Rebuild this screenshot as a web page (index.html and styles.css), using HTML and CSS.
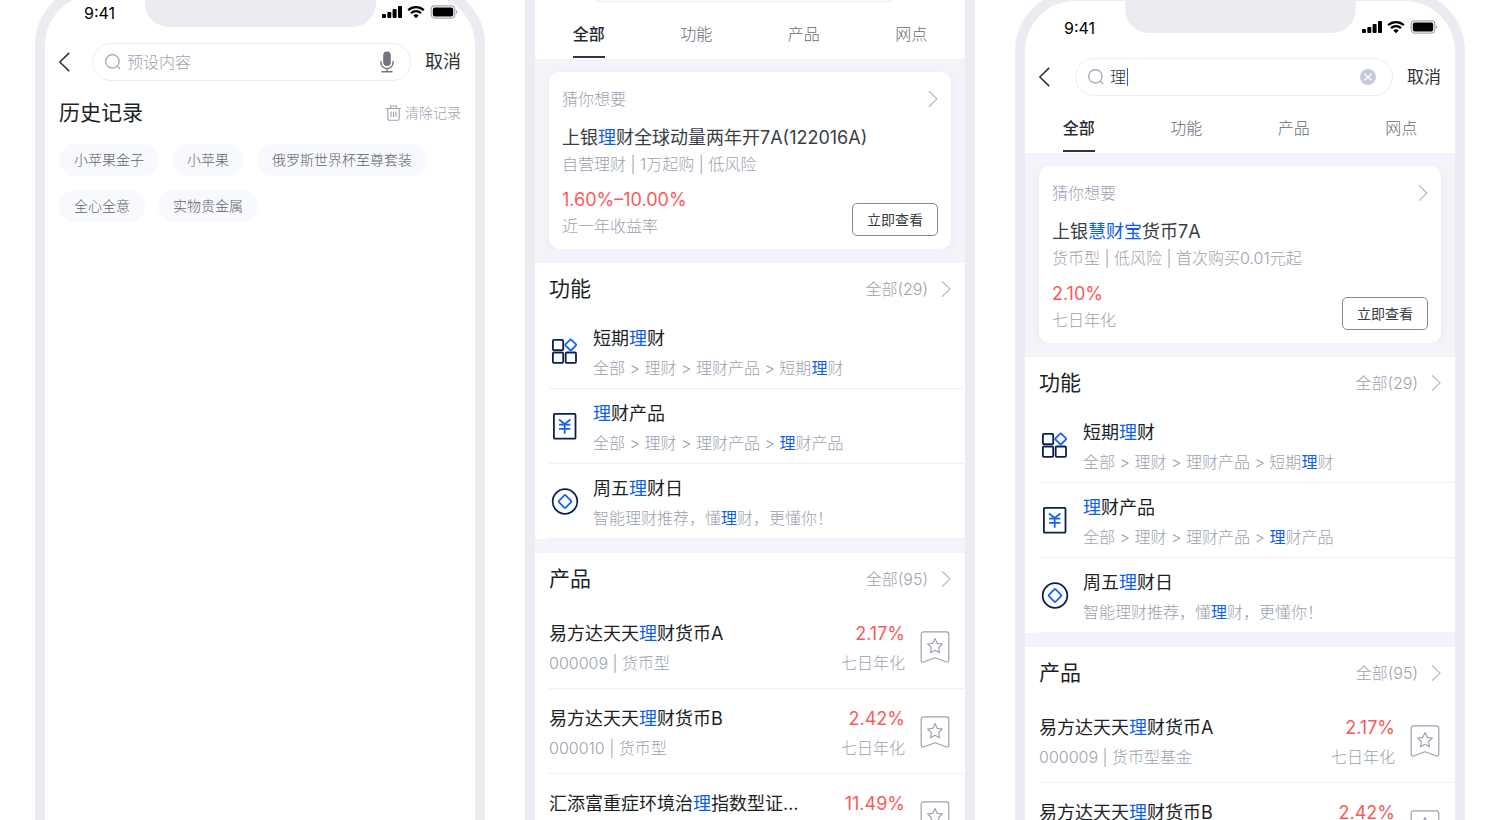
FILE: index.html
```html
<!DOCTYPE html>
<html lang="zh-CN">
<head>
    <meta charset="UTF-8">
    <meta name="viewport" content="width=device-width, initial-scale=1.0">
    <title>搜索</title>
    <link rel="stylesheet" href="styles.css">
</head>
<body>
    <!-- Shared icons -->
    <svg class="sprite" aria-hidden="true">
        <symbol id="i-signal" viewBox="0 0 20 14">
            <rect x="0" y="9" width="4" height="4" rx="1"/>
            <rect x="5.300" y="7" width="4" height="6" rx="1"/>
            <rect x="10.600" y="4" width="4" height="9" rx="1"/>
            <rect x="16" y="1" width="4" height="12" rx="1"/>
        </symbol>
        <symbol id="i-wifi" viewBox="0 0 18 14">
            <path d="M1.200 5.200a11.300 11.300 0 0 1 15.600 0M4 8.200a7.200 7.200 0 0 1 10 0" fill="none" stroke="currentColor" stroke-width="2.300"/>
            <path d="M9 13.200 6.300 10.500a3.900 3.900 0 0 1 5.400 0z"/>
        </symbol>
        <symbol id="i-battery" viewBox="0 0 28 14">
            <rect x="1.200" y=".9" width="23.600" height="12.200" rx="3.500" fill="none" stroke="#a9a9a9" stroke-width="1.200"/>
            <rect x="2.800" y="2.500" width="20.400" height="9" rx="2"/>
            <path d="M26 5v4a2.200 2.200 0 0 0 0-4z" fill="#a9a9a9"/>
        </symbol>
        <symbol id="i-back" viewBox="0 0 12 20">
            <path d="M10.200.9.800 10l9.400 9.100" fill="none" stroke="currentColor" stroke-width="1.600"/>
        </symbol>
        <symbol id="i-search" viewBox="0 0 16 16">
            <circle cx="7.400" cy="7.400" r="6.700" fill="none" stroke="currentColor" stroke-width="1.200"/>
            <path d="m12.200 12.200 3 3" stroke="currentColor" stroke-width="1.200"/>
        </symbol>
        <symbol id="i-mic" viewBox="0 0 14 22">
            <rect x="3.200" y=".5" width="7.600" height="14.500" rx="3.800"/>
            <path d="M.9 10v1.500a6.100 6.100 0 0 0 12.200 0V10M7 17.600v3M1.500 20.700h11" fill="none" stroke="currentColor" stroke-width="1.400"/>
        </symbol>
        <symbol id="i-clear" viewBox="0 0 16 16">
            <circle cx="8" cy="8" r="8"/>
            <path d="m4.700 4.700 6.600 6.600m0-6.600-6.600 6.600" stroke="#fff" stroke-width="1.300"/>
        </symbol>
        <symbol id="i-trash" viewBox="0 0 15 16">
            <path d="M0 3.500h15M4.500 3.200V1h6v2.200M1.800 3.500v10a1.800 1.800 0 0 0 1.800 1.800h7.800a1.800 1.800 0 0 0 1.800-1.800v-10M5 6.500V12M7.500 6.500V12M10 6.500V12" fill="none" stroke="currentColor" stroke-width="1.100"/>
        </symbol>
        <symbol id="i-next" viewBox="0 0 10 18">
            <path d="m1 1.200 8 7.800-8 7.800" fill="none" stroke="currentColor" stroke-width="1.200"/>
        </symbol>
        <symbol id="i-grid" viewBox="0 0 30 30">
            <g fill="none" stroke-width="1.800">
                <path d="M4.900 3.900h8.300q1 0 1 1v8.300q0 1-1 1H4.900q-1 0-1-1V4.900q0-1 1-1zM4.900 16.500h8.300q1 0 1 1v8.300q0 1-1 1H4.900q-1 0-1-1v-8.300q0-1 1-1zM17.700 16.500H26q1 0 1 1v8.300q0 1-1 1h-8.300q-1 0-1-1v-8.300q0-1 1-1z" stroke="#0c2050"/>
                <path d="m21 3.800-4.400 4.400q-.7.7 0 1.400l4.400 4.400q.7.700 1.400 0l4.400-4.400q.7-.7 0-1.400l-4.400-4.400q-.7-.7-1.400 0z" stroke="#1663f5"/>
            </g>
        </symbol>
        <symbol id="i-yuan" viewBox="0 0 30 30">
            <g fill="none" stroke-width="1.800">
                <rect x="4.900" y="2.900" width="21.600" height="24.800" rx="1" stroke="#0c2050"/>
                <path d="m10 8.500 5.700 4.500 5.700-4.500M10 13.700h11.400M10 17.800h11.400M15.700 13v9.800" stroke="#1663f5"/>
            </g>
        </symbol>
        <symbol id="i-coin" viewBox="0 0 30 30">
            <g fill="none" stroke-width="1.800">
                <circle cx="16" cy="15.500" r="12.300" stroke="#0c2050"/>
                <path d="m15.300 9.400-5.400 5.400q-.7.7 0 1.400l5.400 5.400q.7.700 1.400 0l5.400-5.400q.7-.7 0-1.400l-5.400-5.400q-.7-.7-1.400 0z" stroke="#1663f5"/>
            </g>
        </symbol>
        <symbol id="i-star" viewBox="0 0 30 32">
            <g fill="none" stroke="currentColor" stroke-width="1.200" stroke-linejoin="round">
                <path d="M3.700.8h22.600q2.500 0 2.500 2.500v26q0 2.300-2.200 1.700L15 26.800 3.400 31q-2.200.6-2.200-1.700v-26Q1.200.8 3.700.8z"/>
                <path d="m15 7.600 2.200 4.700 5.100.7-3.700 3.600.9 5.100-4.500-2.500-4.500 2.500.9-5.100L7.700 13l5.100-.7z"/>
            </g>
        </symbol>
    </svg>

    <main class="stage">
        <!-- Search history -->
        <section class="phone phone-history">
            <div class="notch"></div>
            <div class="status-bar">
                <span class="time">9:41</span>
                <span class="status-icons">
                    <svg width="20" height="14"><use href="#i-signal"/></svg>
                    <svg width="18" height="14"><use href="#i-wifi"/></svg>
                    <svg width="28" height="14"><use href="#i-battery"/></svg>
                </span>
            </div>
            <div class="nav">
                <button class="back" aria-label="返回"><svg width="12" height="20"><use href="#i-back"/></svg></button>
                <div class="search">
                    <svg class="search-icon" width="16" height="16"><use href="#i-search"/></svg>
                    <input type="text" placeholder="预设内容" aria-label="搜索">
                    <button class="mic" aria-label="语音输入"><svg width="14" height="22"><use href="#i-mic"/></svg></button>
                </div>
                <button class="cancel">取消</button>
            </div>
            <div class="history">
                <div class="history-head">
                    <h2>历史记录</h2>
                    <button class="clear-history"><svg width="15" height="16"><use href="#i-trash"/></svg>清除记录</button>
                </div>
                <div class="tags">
                    <button class="tag">小苹果金子</button>
                    <button class="tag">小苹果</button>
                    <button class="tag">俄罗斯世界杯至尊套装</button>
                    <button class="tag">全心全意</button>
                    <button class="tag">实物贵金属</button>
                </div>
            </div>
        </section>

        <!-- Results, scrolled -->
        <section class="phone phone-scrolled">
            <div class="notch"></div>
            <div class="status-bar"></div>
            <div class="nav">
                <div class="search"></div>
            </div>
            <nav class="tabs">
                <button class="tab active"><span>全部</span></button>
                <button class="tab"><span>功能</span></button>
                <button class="tab"><span>产品</span></button>
                <button class="tab"><span>网点</span></button>
            </nav>
            <div class="guess">
                <article class="card">
                    <a class="card-head" href="#">猜你想要<svg width="10" height="18"><use href="#i-next"/></svg></a>
                    <h3>上银<em>理</em>财全球动量两年开7A(122016A)</h3>
                    <p class="card-desc">自营理财 | 1万起购 | 低风险</p>
                    <div class="card-foot">
                        <div>
                            <p class="rate">1.60%–10.00%</p>
                            <p class="rate-label">近一年收益率</p>
                        </div>
                        <button class="view">立即查看</button>
                    </div>
                </article>
            </div>
            <section class="block">
                <div class="block-head">
                    <h2>功能</h2>
                    <a href="#">全部(29)<svg width="10" height="18"><use href="#i-next"/></svg></a>
                </div>
                <ul class="list">
                    <li class="feature">
                        <svg width="30" height="30"><use href="#i-grid"/></svg>
                        <div>
                            <h3>短期<em>理</em>财</h3>
                            <p>全部 &gt; 理财 &gt; 理财产品 &gt; 短期<em>理</em>财</p>
                        </div>
                    </li>
                    <li class="feature">
                        <svg width="30" height="30"><use href="#i-yuan"/></svg>
                        <div>
                            <h3><em>理</em>财产品</h3>
                            <p>全部 &gt; 理财 &gt; 理财产品 &gt; <em>理</em>财产品</p>
                        </div>
                    </li>
                    <li class="feature">
                        <svg width="30" height="30"><use href="#i-coin"/></svg>
                        <div>
                            <h3>周五<em>理</em>财日</h3>
                            <p>智能理财推荐，懂<em>理</em>财，更懂你！</p>
                        </div>
                    </li>
                </ul>
            </section>
            <section class="block">
                <div class="block-head">
                    <h2>产品</h2>
                    <a href="#">全部(95)<svg width="10" height="18"><use href="#i-next"/></svg></a>
                </div>
                <ul class="list">
                    <li class="product">
                        <div class="product-info">
                            <h3>易方达天天<em>理</em>财货币A</h3>
                            <p>000009 | 货币型</p>
                        </div>
                        <div class="product-rate">
                            <p class="rate">2.17%</p>
                            <p>七日年化</p>
                        </div>
                        <button class="fav" aria-label="收藏"><svg width="30" height="32"><use href="#i-star"/></svg></button>
                    </li>
                    <li class="product">
                        <div class="product-info">
                            <h3>易方达天天<em>理</em>财货币B</h3>
                            <p>000010 | 货币型</p>
                        </div>
                        <div class="product-rate">
                            <p class="rate">2.42%</p>
                            <p>七日年化</p>
                        </div>
                        <button class="fav" aria-label="收藏"><svg width="30" height="32"><use href="#i-star"/></svg></button>
                    </li>
                    <li class="product">
                        <div class="product-info">
                            <h3>汇添富重症环境治<em>理</em>指数型证...</h3>
                        </div>
                        <div class="product-rate">
                            <p class="rate">11.49%</p>
                        </div>
                        <button class="fav" aria-label="收藏"><svg width="30" height="32"><use href="#i-star"/></svg></button>
                    </li>
                </ul>
            </section>
        </section>

        <!-- Results -->
        <section class="phone">
            <div class="notch"></div>
            <div class="status-bar">
                <span class="time">9:41</span>
                <span class="status-icons">
                    <svg width="20" height="14"><use href="#i-signal"/></svg>
                    <svg width="18" height="14"><use href="#i-wifi"/></svg>
                    <svg width="28" height="14"><use href="#i-battery"/></svg>
                </span>
            </div>
            <div class="nav">
                <button class="back" aria-label="返回"><svg width="12" height="20"><use href="#i-back"/></svg></button>
                <div class="search">
                    <svg class="search-icon" width="16" height="16"><use href="#i-search"/></svg>
                    <input type="text" value="理" aria-label="搜索">
                    <span class="caret"></span>
                    <button class="clear" aria-label="清空"><svg width="16" height="16"><use href="#i-clear"/></svg></button>
                </div>
                <button class="cancel">取消</button>
            </div>
            <nav class="tabs">
                <button class="tab active"><span>全部</span></button>
                <button class="tab"><span>功能</span></button>
                <button class="tab"><span>产品</span></button>
                <button class="tab"><span>网点</span></button>
            </nav>
            <div class="guess">
                <article class="card">
                    <a class="card-head" href="#">猜你想要<svg width="10" height="18"><use href="#i-next"/></svg></a>
                    <h3>上银<em>慧财宝</em>货币7A</h3>
                    <p class="card-desc">货币型 | 低风险 | 首次购买0.01元起</p>
                    <div class="card-foot">
                        <div>
                            <p class="rate">2.10%</p>
                            <p class="rate-label">七日年化</p>
                        </div>
                        <button class="view">立即查看</button>
                    </div>
                </article>
            </div>
            <section class="block">
                <div class="block-head">
                    <h2>功能</h2>
                    <a href="#">全部(29)<svg width="10" height="18"><use href="#i-next"/></svg></a>
                </div>
                <ul class="list">
                    <li class="feature">
                        <svg width="30" height="30"><use href="#i-grid"/></svg>
                        <div>
                            <h3>短期<em>理</em>财</h3>
                            <p>全部 &gt; 理财 &gt; 理财产品 &gt; 短期<em>理</em>财</p>
                        </div>
                    </li>
                    <li class="feature">
                        <svg width="30" height="30"><use href="#i-yuan"/></svg>
                        <div>
                            <h3><em>理</em>财产品</h3>
                            <p>全部 &gt; 理财 &gt; 理财产品 &gt; <em>理</em>财产品</p>
                        </div>
                    </li>
                    <li class="feature">
                        <svg width="30" height="30"><use href="#i-coin"/></svg>
                        <div>
                            <h3>周五<em>理</em>财日</h3>
                            <p>智能理财推荐，懂<em>理</em>财，更懂你！</p>
                        </div>
                    </li>
                </ul>
            </section>
            <section class="block">
                <div class="block-head">
                    <h2>产品</h2>
                    <a href="#">全部(95)<svg width="10" height="18"><use href="#i-next"/></svg></a>
                </div>
                <ul class="list">
                    <li class="product">
                        <div class="product-info">
                            <h3>易方达天天<em>理</em>财货币A</h3>
                            <p>000009 | 货币型基金</p>
                        </div>
                        <div class="product-rate">
                            <p class="rate">2.17%</p>
                            <p>七日年化</p>
                        </div>
                        <button class="fav" aria-label="收藏"><svg width="30" height="32"><use href="#i-star"/></svg></button>
                    </li>
                    <li class="product">
                        <div class="product-info">
                            <h3>易方达天天<em>理</em>财货币B</h3>
                        </div>
                        <div class="product-rate">
                            <p class="rate">2.42%</p>
                        </div>
                        <button class="fav" aria-label="收藏"><svg width="30" height="32"><use href="#i-star"/></svg></button>
                    </li>
                </ul>
            </section>
        </section>
    </main>
</body>
</html>
```
FILE: styles.css
```css
* {
    box-sizing: border-box;
}

body {
    margin: 0;
    background: #fff;
    color: #1c1f26;
    font-family: Inter, "Noto Sans CJK SC", sans-serif;
    font-size: 16px;
    font-weight: 300;
    line-height: 24px;
}

h2, h3, p, ul {
    margin: 0;
    padding: 0;
    font-weight: inherit;
}

h2, h3 {
    font-weight: 400;
}

ul {
    list-style: none;
}

em {
    font-style: normal;
    font-weight: 400;
    color: #0d5fe8;
}

a {
    color: inherit;
    text-decoration: none;
}

button {
    margin: 0;
    padding: 0;
    border: none;
    background: none;
    color: inherit;
    font: inherit;
    cursor: pointer;
}

svg {
    display: block;
    flex-shrink: 0;
    fill: currentColor;
}

.sprite {
    position: absolute;
    width: 0;
    height: 0;
}

.stage {
    display: grid;
    grid-template-columns: repeat(3, minmax(0, 1fr));
    align-items: start;
    gap: 40px;
    height: 100vh;
    padding: 0 35px;
    overflow: hidden;
}

/* Phone frame */
.phone {
    position: relative;
    min-height: calc(100vh + 240px);
    margin-top: -9px;
    border: 10px solid #eaecf2;
    border-radius: 60px;
    background: #fff;
}

.phone-history {
    margin-top: -15px;
}

.phone-scrolled {
    margin-top: -103px;
}

.notch {
    position: absolute;
    top: 0;
    left: 50%;
    width: 231px;
    height: 32px;
    margin-left: -115px;
    border-radius: 0 0 24px 24px;
    background: #eaecf2;
}

.status-bar {
    display: flex;
    justify-content: space-between;
    align-items: flex-start;
    height: 57px;
    padding: 16px 17px 0 39px;
    color: #000;
    font-weight: 400;
    line-height: 22px;
}

.phone-history .status-bar {
    height: 48px;
    padding-top: 7px;
}

.status-icons {
    display: flex;
    gap: 5px;
    padding-top: 3px;
}

/* Search bar */
.nav {
    display: flex;
    align-items: center;
    padding: 0 14px;
}

.phone-scrolled .nav {
    padding: 0 48px 0 50px;
}

.back {
    margin-right: 24px;
    color: #30333a;
}

.phone-history .back {
    margin-right: 21px;
}

.search {
    position: relative;
    display: flex;
    flex: 1;
    align-items: center;
    gap: 6px;
    min-width: 0;
    height: 38px;
    margin-right: 14px;
    padding: 0 16px 0 12px;
    border: 1px solid #ececef;
    border-radius: 19px;
}

.search-icon {
    color: #9ba2b0;
}

.search input {
    flex: 1;
    min-width: 0;
    padding: 0;
    border: none;
    outline: none;
    background: none;
    color: #30333a;
    font: inherit;
}

.search input::placeholder {
    color: #9ba2b0;
}

.caret {
    position: absolute;
    left: 51px;
    width: 1px;
    height: 18px;
    background: #1663f5;
}

.mic {
    color: #70757f;
}

.clear {
    color: #c5cad6;
}

.cancel {
    color: #30333a;
    font-size: 17px;
    font-weight: 400;
}

.phone-history .cancel {
    font-size: 18px;
}

/* History */
.history {
    padding: 18px 14px;
}

.history-head {
    display: flex;
    justify-content: space-between;
    align-items: center;
}

.history-head h2,
.block-head h2 {
    font-size: 21px;
    line-height: 28px;
}

.clear-history {
    display: flex;
    align-items: center;
    gap: 4px;
    color: #9ba2b0;
    font-size: 14px;
}

.tags {
    display: flex;
    flex-wrap: wrap;
    gap: 14px 13px;
    margin-top: 17px;
}

.tag {
    padding: 0 15px;
    border-radius: 16px;
    background: #f8f9fe;
    color: #60636b;
    font-size: 14px;
    line-height: 32px;
}

/* Tabs */
.tabs {
    display: grid;
    grid-template-columns: repeat(4, 1fr);
    padding: 20px 0 1px;
}

.tab {
    color: #646973;
}

.tab span {
    display: inline-block;
    padding-bottom: 10px;
    border-bottom: 2px solid transparent;
}

.tab.active {
    color: #26292f;
    font-weight: 500;
}

.tab.active span {
    border-color: #30333a;
}

/* Recommendation card */
.guess {
    padding: 13px 14px 0;
    background: #f3f4f9;
}

.card {
    padding: 15px 13px 13px;
    border-radius: 10px;
    background: #fff;
    box-shadow: 0 2px 6px rgba(60, 70, 110, 0.07);
}

.card-head {
    display: flex;
    justify-content: space-between;
    align-items: center;
    color: #9ba2b0;
}

.card h3 {
    margin-top: 15px;
    color: #3a3d44;
    font-size: 18px;
}

.card-desc {
    margin-top: 2px;
    color: #9ba2b0;
}

.card-foot {
    display: flex;
    justify-content: space-between;
    align-items: flex-end;
    margin-top: 12px;
}

.rate {
    color: #fa5a5a;
    font-size: 18px;
    font-weight: 400;
}

.rate-label {
    margin-top: 4px;
    color: #9ba2b0;
    line-height: 20px;
}

.view {
    padding: 0 14px;
    border: 1px solid #85888f;
    border-radius: 5px;
    color: #3a3d44;
    font-size: 14px;
    font-weight: 400;
    line-height: 31px;
}

/* Result blocks */
.block {
    border-top: 14px solid #f3f4f9;
}

.block-head {
    display: flex;
    justify-content: space-between;
    align-items: center;
    height: 51px;
    padding: 0 14px;
}

.block-head a {
    display: flex;
    align-items: center;
    gap: 13px;
    color: #9ba2b0;
}

.card-head svg,
.block-head svg {
    color: #b8bdca;
}

.list {
    padding-left: 14px;
}

.list li {
    display: flex;
    border-bottom: 1px solid #eff0f3;
}

.list h3 {
    font-size: 18px;
}

.feature {
    align-items: center;
    gap: 14px;
    padding: 8px 14px 8px 0;
}

.feature div {
    padding-top: 5px;
}

.feature p {
    margin-top: 5px;
    color: #9ba2b0;
}

.product {
    align-items: flex-start;
    gap: 15px;
    padding: 18px 15px 13px 0;
}

.product-info {
    flex: 1;
    min-width: 0;
}

.product-info p,
.product-rate p + p {
    margin-top: 5px;
    color: #9ba2b0;
}

.product-rate {
    text-align: right;
}

.fav {
    padding-top: 9px;
    color: #9ba2b0;
}
```
